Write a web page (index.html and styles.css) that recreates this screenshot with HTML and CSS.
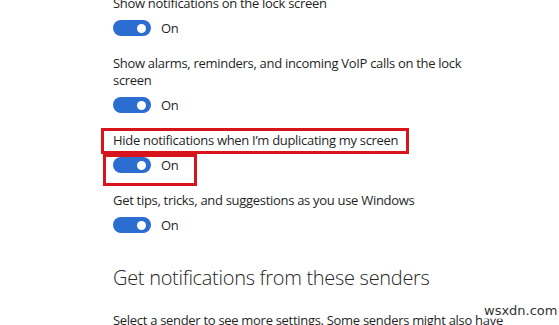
FILE: index.html
```html
<!DOCTYPE html>
<html>
<head>
<meta charset="utf-8">
<link rel="stylesheet" href="styles.css">
</head>
<body>
<div class="page">
  <div class="settings">
    <div class="setting">
      <div class="label">Show notifications on the lock screen</div>
      <div class="toggle-row"><span class="toggle"><span class="knob"></span></span><span class="state">On</span></div>
    </div>
    <div class="setting">
      <div class="label">Show alarms, reminders, and incoming VoIP calls on the lock screen</div>
      <div class="toggle-row"><span class="toggle"><span class="knob"></span></span><span class="state">On</span></div>
    </div>
    <div class="setting">
      <div class="label"><span class="hl hl-label">Hide notifications when I’m duplicating my screen</span></div>
      <div class="toggle-row"><span class="hl hl-toggle"><span class="toggle"><span class="knob"></span></span><span class="state">On</span></span></div>
    </div>
    <div class="setting">
      <div class="label">Get tips, tricks, and suggestions as you use Windows</div>
      <div class="toggle-row"><span class="toggle"><span class="knob"></span></span><span class="state">On</span></div>
    </div>
    <h2 class="heading">Get notifications from these senders</h2>
    <p class="desc">Select a sender to see more settings. Some senders might also have</p>
  </div>
  <div class="watermark">wsxdn.com</div>
</div>
</body>
</html>
```

FILE: styles.css
```css
html, body {
  margin: 0;
  padding: 0;
  background: #ffffff;
}
body {
  width: 559px;
  height: 325px;
  overflow: hidden;
  font-family: "Open Sans", "Noto Sans", sans-serif;
  color: #1f1f1f;
}
.page {
  position: relative;
  width: 559px;
  height: 325px;
  overflow: hidden;
}
.settings {
  padding-left: 113px;
  margin-top: -5px;
  width: 352px;
}
.setting {
  display: flex;
  flex-direction: column;
  margin-bottom: 19px;
}
.label {
  font-size: 13px;
  line-height: 17px;
  letter-spacing: -0.3px;
}
.toggle-row {
  display: flex;
  align-items: center;
  margin-top: 8px;
  height: 16px;
}
.toggle {
  width: 38px;
  height: 16px;
  border-radius: 8px;
  background: #2c6dd2;
  display: flex;
  align-items: center;
  justify-content: flex-end;
  padding-right: 5px;
  box-sizing: border-box;
  flex: none;
}
.knob {
  width: 9px;
  height: 9px;
  border-radius: 50%;
  background: #ffffff;
}
.state {
  margin-left: 10px;
  font-size: 13px;
  line-height: 16px;
  letter-spacing: -0.3px;
}
.hl {
  position: relative;
  display: inline-flex;
  align-items: center;
}
.hl::after {
  content: "";
  position: absolute;
  border: 3px solid #d7141c;
  box-sizing: border-box;
  pointer-events: none;
}
.hl-label::after {
  left: -12px;
  right: -11px;
  top: -4px;
  bottom: -5px;
}
.hl-toggle::after {
  left: -10px;
  width: 94px;
  top: -3px;
  bottom: -13px;
}
.setting:nth-child(4) {
  margin-bottom: 0;
}
.heading {
  margin: 32px 0 0 0;
  font-size: 20px;
  font-weight: 300;
  line-height: 26px;
  letter-spacing: -0.3px;
  color: #262626;
  white-space: nowrap;
}
.desc {
  margin: 21px 0 0 0;
  font-size: 13px;
  line-height: 17px;
  letter-spacing: -0.3px;
  white-space: nowrap;
}
.watermark {
  position: absolute;
  left: 484px;
  top: 303px;
  font-family: "DejaVu Sans", sans-serif;
  font-size: 13px;
  line-height: 16px;
  color: #333;
  background: rgba(255,255,255,0.6);
}
```
